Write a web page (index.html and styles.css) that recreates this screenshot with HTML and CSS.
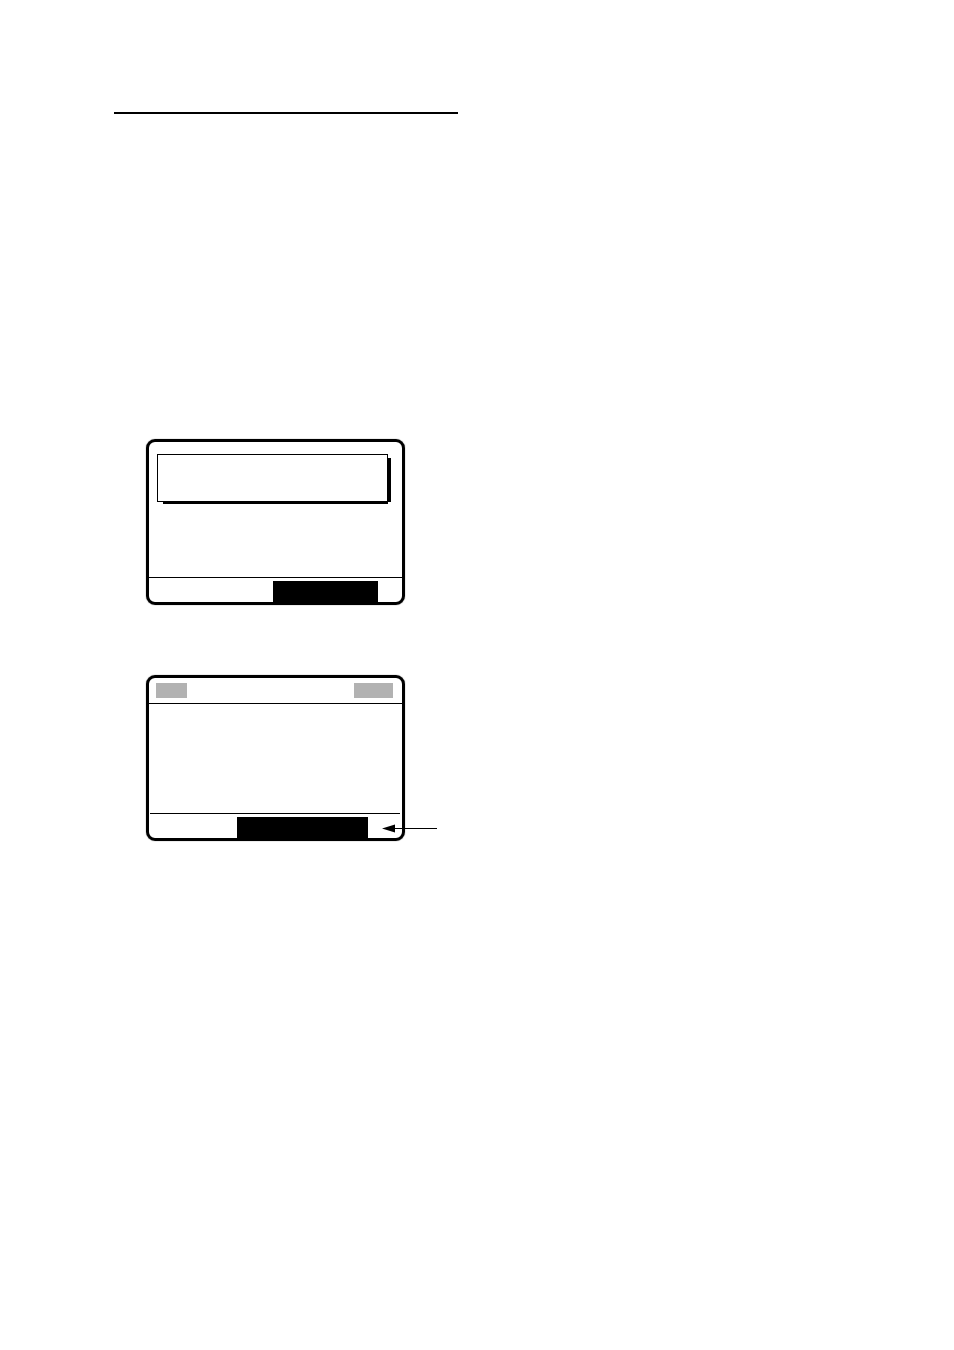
FILE: index.html
```html
<!DOCTYPE html>
<html lang="en">
<head>
<meta charset="utf-8">
<title>Display screens</title>
<link rel="stylesheet" href="styles.css">
</head>
<body>
<main class="page">
  <hr class="rule">
  <div class="figures">
    <section class="screen">
      <div class="screen-body">
        <div class="popup"></div>
      </div>
      <div class="softkeys softkeys-popup">
        <div class="highlight"></div>
      </div>
    </section>
    <section class="screen">
      <div class="status">
        <span class="tag"></span>
        <span class="tag tag-wide"></span>
      </div>
      <div class="screen-body"></div>
      <div class="softkeys softkeys-main">
        <div class="highlight"></div>
      </div>
      <svg class="arrow" width="55" height="9" viewBox="0 0 55 9" aria-hidden="true">
        <path d="M12 4.500H55" stroke="#000" stroke-width="1"/>
        <path d="M0 4.500L13 .5V8.500Z"/>
      </svg>
    </section>
  </div>
</main>
</body>
</html>
```
FILE: styles.css
```css
* {
  box-sizing: border-box;
}

body {
  margin: 0;
  background: #fff;
  font-family: "Liberation Sans", Arial, sans-serif;
}

.page {
  padding: 112px 114px;
}

.rule {
  max-width: 344px;
  height: 2px;
  margin: 0;
  border: 0;
  background: #000;
}

.figures {
  display: flex;
  flex-direction: column;
  gap: 70px;
  max-width: 291px;
  padding: 325px 0 0 32px;
}

.screen {
  position: relative;
  display: flex;
  flex-direction: column;
  min-height: 166px;
  border: 3px solid #000;
  border-radius: 9px;
  box-shadow: 0 0 1px #444;
}

.screen-body {
  flex: 1;
  padding: 12px 14px 0 8px;
}

.popup {
  position: relative;
  height: 48px;
  border: 1px solid #000;
}

.popup::before,
.popup::after {
  content: "";
  position: absolute;
  background: #000;
}

.popup::before {
  top: 3px;
  right: -4px;
  bottom: -1px;
  width: 3px;
}

.popup::after {
  right: -1px;
  bottom: -3px;
  left: 5px;
  height: 3px;
}

.softkeys {
  display: flex;
  justify-content: flex-end;
  padding-top: 3px;
  border-top: 1px solid #000;
}

.softkeys-popup {
  padding-right: 24px;
}

.softkeys-main {
  margin: 0 2px 0 1px;
  padding-right: 32px;
}

.highlight {
  width: 105px;
  height: 21px;
  background: #000;
}

.softkeys-main .highlight {
  width: 131px;
}

.status {
  display: flex;
  justify-content: space-between;
  padding: 5px 9px 5px 7px;
  border-bottom: 1px solid #000;
}

.tag {
  width: 31px;
  height: 15px;
  background: #b2b2b2;
}

.tag-wide {
  width: 39px;
}

.arrow {
  position: absolute;
  right: -35px;
  bottom: 5px;
}
```
